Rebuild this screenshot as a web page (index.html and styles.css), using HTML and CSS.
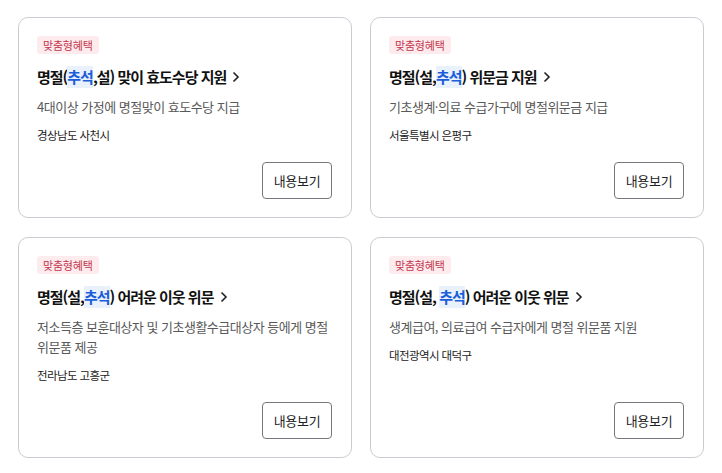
FILE: index.html
```html
<!DOCTYPE html>
<html lang="ko">
<head>
<meta charset="utf-8">
<link rel="stylesheet" href="styles.css">
</head>
<body>
<div class="grid">
  <div class="card">
    <span class="tag">맞춤형혜택</span>
    <a class="title">명절(<mark>추석</mark>,설) 맞이 효도수당 지원 <svg class="chev" width="8" height="12" viewBox="0 0 8 12"><path d="M1.5 1.5 L6 6 L1.5 10.5" fill="none" stroke="#222" stroke-width="1.6"/></svg></a>
    <p class="desc">4대이상 가정에 명절맞이 효도수당 지급</p>
    <p class="loc">경상남도 사천시</p>
    <button class="btn">내용보기</button>
  </div>
  <div class="card">
    <span class="tag">맞춤형혜택</span>
    <a class="title">명절(설,<mark>추석</mark>) 위문금 지원 <svg class="chev" width="8" height="12" viewBox="0 0 8 12"><path d="M1.5 1.5 L6 6 L1.5 10.5" fill="none" stroke="#222" stroke-width="1.6"/></svg></a>
    <p class="desc">기초생계·의료 수급가구에 명절위문금 지급</p>
    <p class="loc">서울특별시 은평구</p>
    <button class="btn">내용보기</button>
  </div>
  <div class="card">
    <span class="tag">맞춤형혜택</span>
    <a class="title">명절(설,<mark>추석</mark>) 어려운 이웃 위문 <svg class="chev" width="8" height="12" viewBox="0 0 8 12"><path d="M1.5 1.5 L6 6 L1.5 10.5" fill="none" stroke="#222" stroke-width="1.6"/></svg></a>
    <p class="desc">저소득층 보훈대상자 및 기초생활수급대상자 등에게 명절 위문품 제공</p>
    <p class="loc">전라남도 고흥군</p>
    <button class="btn">내용보기</button>
  </div>
  <div class="card">
    <span class="tag">맞춤형혜택</span>
    <a class="title">명절(설, <mark>추석</mark>) 어려운 이웃 위문 <svg class="chev" width="8" height="12" viewBox="0 0 8 12"><path d="M1.5 1.5 L6 6 L1.5 10.5" fill="none" stroke="#222" stroke-width="1.6"/></svg></a>
    <p class="desc">생계급여, 의료급여 수급자에게 명절 위문품 지원</p>
    <p class="loc">대전광역시 대덕구</p>
    <button class="btn">내용보기</button>
  </div>
</div>
</body>
</html>
```
FILE: styles.css
```css
* { box-sizing: border-box; }
html, body { margin: 0; padding: 0; background: #fff; }
body {
  font-family: "Noto Sans CJK KR", "Noto Sans", sans-serif;
  color: #222;
}
.grid {
  display: grid;
  grid-template-columns: 334px 334px;
  column-gap: 18px;
  row-gap: 19px;
  padding: 17px 0 0 18px;
}
.card {
  border: 1px solid #c9cdd2;
  border-radius: 10px;
  padding: 18px 19px 18px 18px;
  display: flex;
  flex-direction: column;
  align-items: flex-start;
}
.tag {
  display: inline-block;
  height: 18px;
  line-height: 18px;
  padding: 0 6px;
  font-size: 11px;
  color: #c4364c;
  background: #fdebee;
  border-radius: 3px;
  letter-spacing: -0.2px;
}
.title {
  margin-top: 12px;
  font-size: 15px;
  line-height: 22px;
  font-weight: 700;
  color: #111;
  letter-spacing: -1px;
  display: flex;
  align-items: center;
  white-space: pre;
}
.title mark {
  background: #e9f1fd;
  color: #1c5ed8;
}
.chev { margin-left: 3px; }
.desc {
  margin: 9px 0 0;
  font-size: 13px;
  line-height: 20px;
  color: #595959;
  letter-spacing: -0.5px;
}
.loc {
  margin: 10px 0 19px;
  font-size: 11.5px;
  line-height: 16px;
  color: #222;
  letter-spacing: -0.6px;
}
.btn {
  margin-top: auto;
  align-self: flex-end;
  width: 70px;
  height: 37px;
  border: 1px solid #74777b;
  border-radius: 4px;
  background: #fff;
  font-family: inherit;
  font-size: 13px;
  color: #222;
  letter-spacing: -0.3px;
  padding: 0;
}
```
